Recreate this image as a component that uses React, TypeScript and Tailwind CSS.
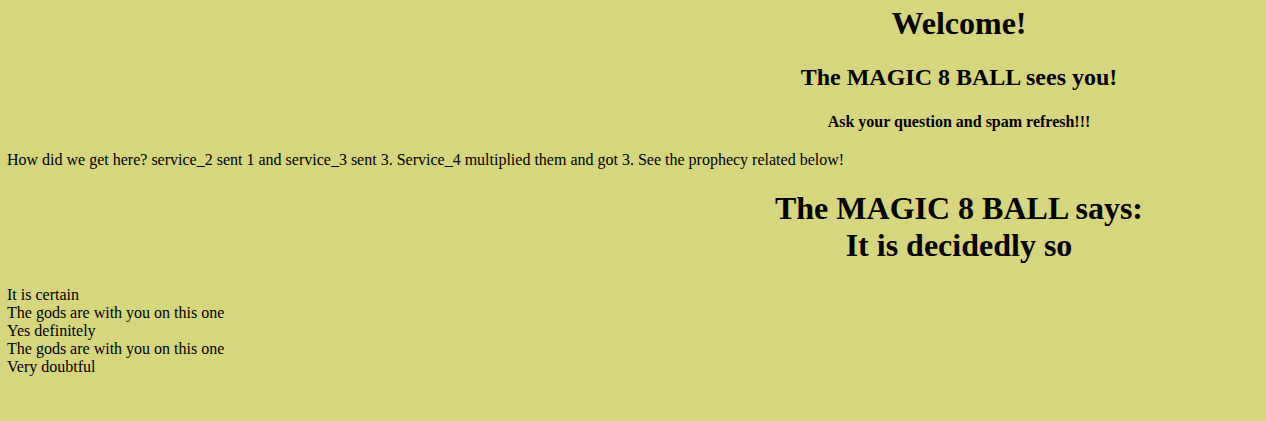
const prophecies = [
  "It is certain",
  "The gods are with you on this one",
  "Yes definitely",
  "The gods are with you on this one",
  "Very doubtful",
]

const App = () => {
  return (
    <div className="w-full h-screen overflow-hidden bg-[#d6d67e] text-black font-['Liberation_Serif',serif] leading-[normal]">
      <div className="w-[1904px] ml-[7px] flex flex-col">
        <h1 className="mt-[5px] text-[32px] font-bold text-center">Welcome!</h1>
        <h2 className="mt-[22px] text-[24px] font-bold text-center">The MAGIC 8 BALL sees you!</h2>
        <h4 className="mt-[22px] text-[16px] font-bold text-center">Ask your question and spam refresh!!!</h4>
        <p className="mt-[20px] text-[16px]">
          How did we get here? service_2 sent 1 and service_3 sent 3. Service_4 multiplied them and got 3. See the prophecy related below!
        </p>
        <h1 className="mt-[21px] text-[32px] font-bold text-center">
          The MAGIC 8 BALL says:
          <br />
          It is decidedly so
        </h1>
        <div className="mt-[22px] text-[16px]">
          {prophecies.map((item, idx) => (
            <div key={idx}>{item}</div>
          ))}
        </div>
      </div>
    </div>
  )
}

export default App
